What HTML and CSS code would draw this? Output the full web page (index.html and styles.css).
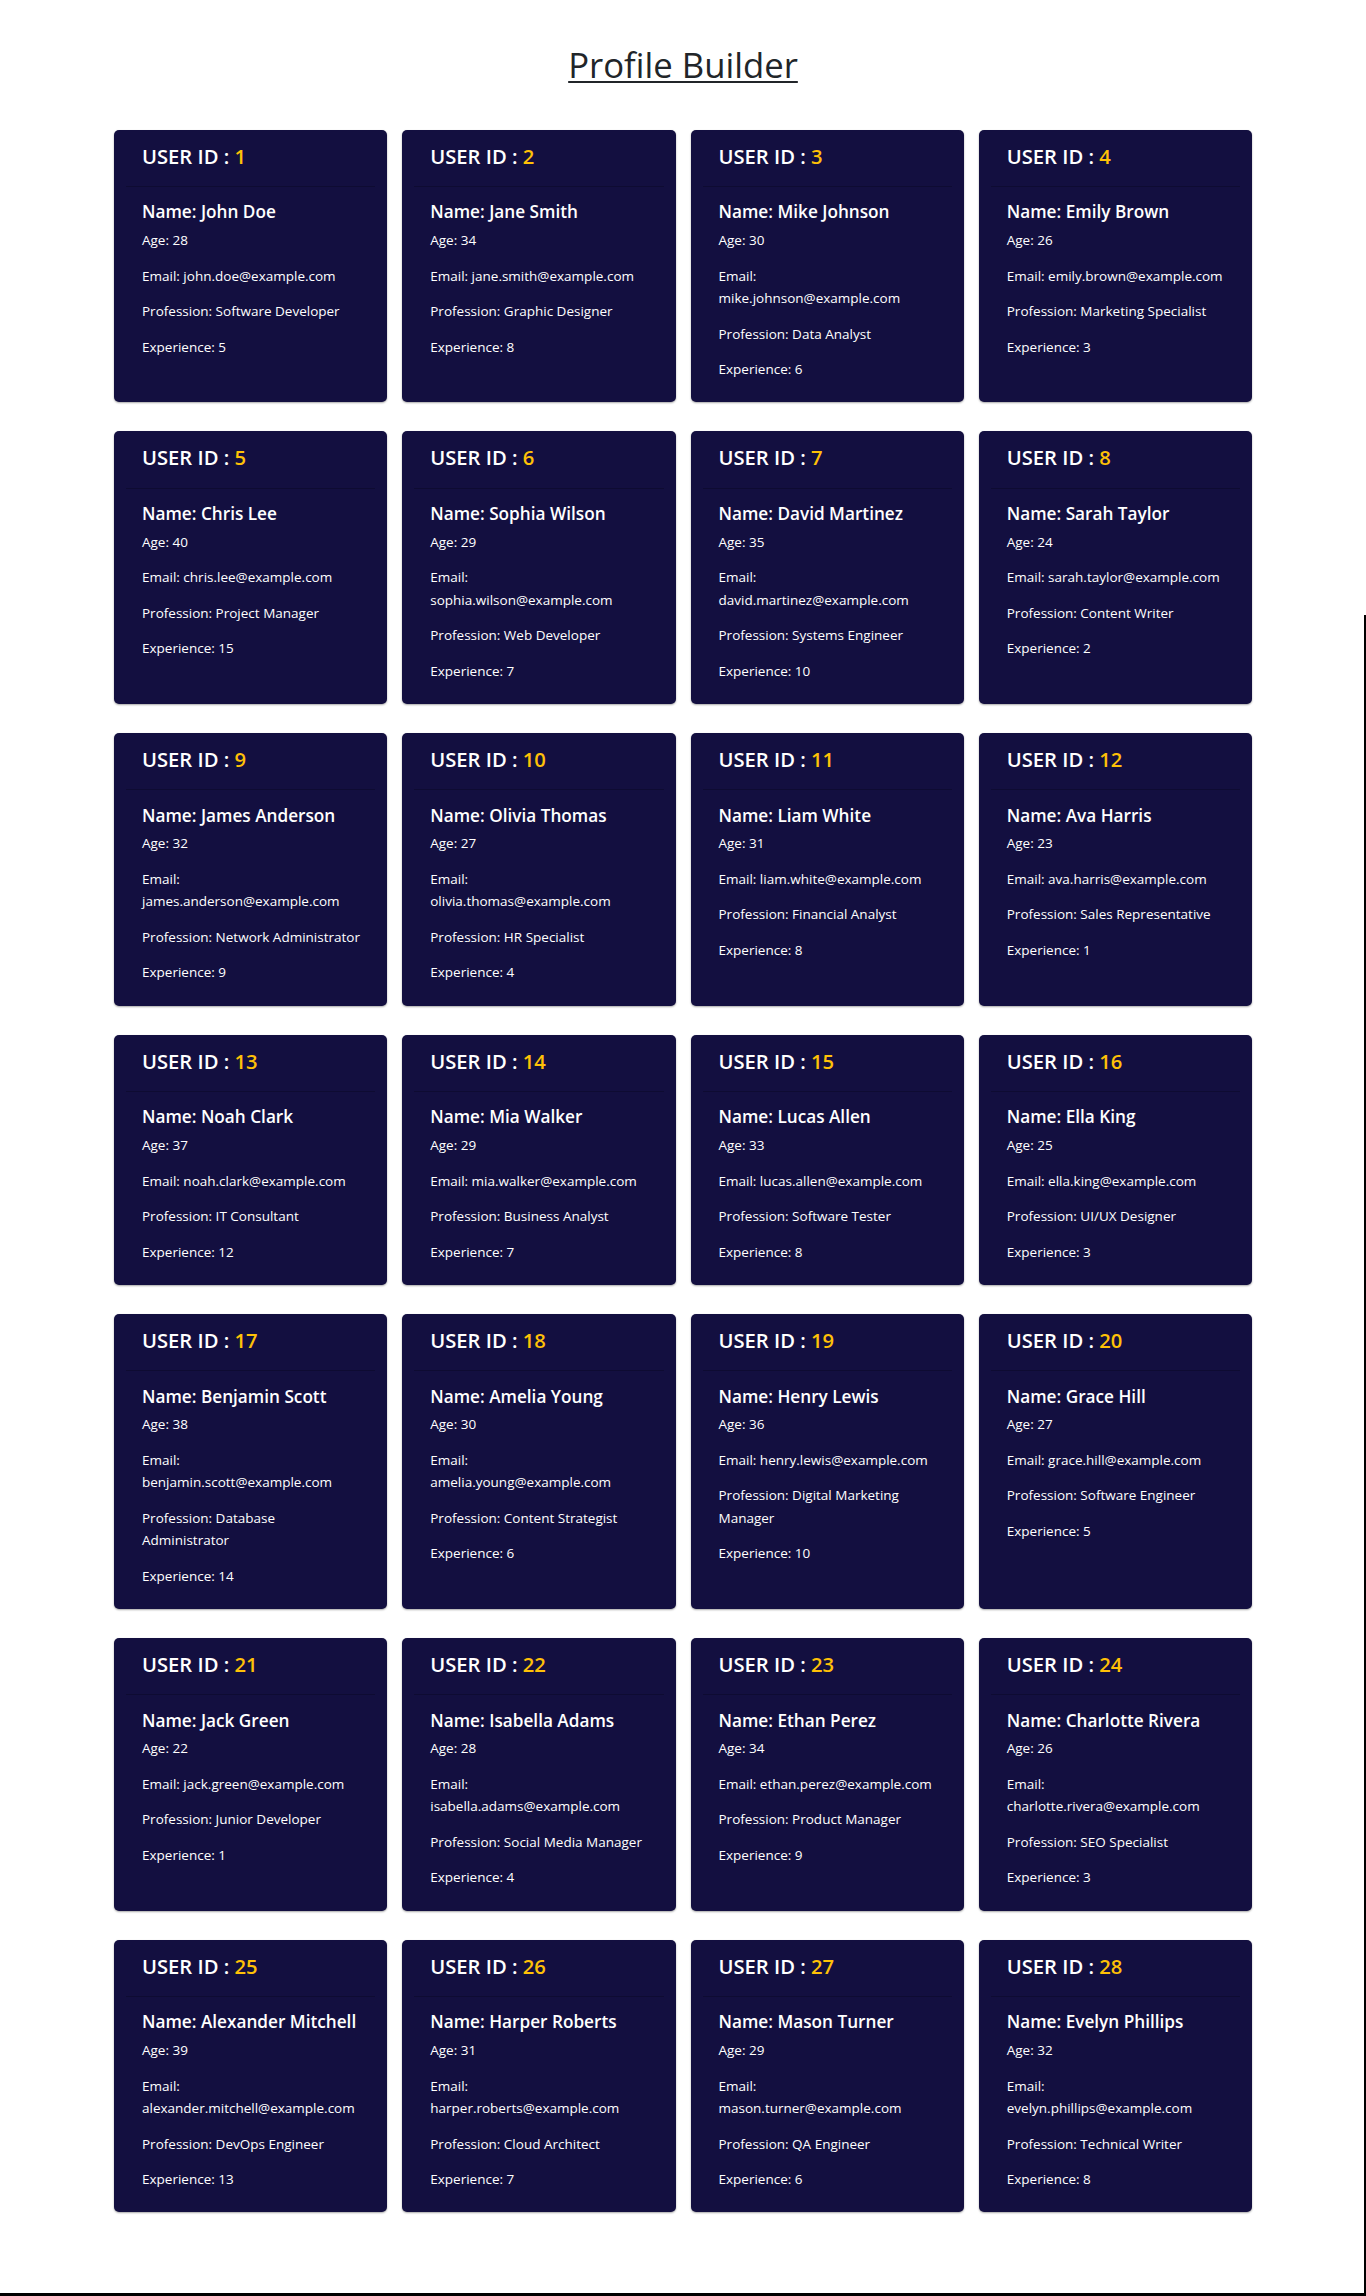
FILE: index.html
```html
<!DOCTYPE html>
<html lang="en">
<head>
<meta charset="utf-8">
<title>Profile Builder</title>
<link rel="stylesheet" href="styles.css">
</head>
<body>
<main class="page">
  <h1 class="page-title">Profile Builder</h1>
  <section class="profiles">
    <article class="card"><div class="card-header"><h4 class="card-title">USER ID : <span class="uid">1</span></h4></div><div class="card-body"><h5 class="name">Name: John Doe</h5><p>Age: 28</p><p>Email: john.doe@example.com</p><p>Profession: Software Developer</p><p>Experience: 5</p></div></article>
    <article class="card"><div class="card-header"><h4 class="card-title">USER ID : <span class="uid">2</span></h4></div><div class="card-body"><h5 class="name">Name: Jane Smith</h5><p>Age: 34</p><p>Email: jane.smith@example.com</p><p>Profession: Graphic Designer</p><p>Experience: 8</p></div></article>
    <article class="card"><div class="card-header"><h4 class="card-title">USER ID : <span class="uid">3</span></h4></div><div class="card-body"><h5 class="name">Name: Mike Johnson</h5><p>Age: 30</p><p>Email: mike.johnson@example.com</p><p>Profession: Data Analyst</p><p>Experience: 6</p></div></article>
    <article class="card"><div class="card-header"><h4 class="card-title">USER ID : <span class="uid">4</span></h4></div><div class="card-body"><h5 class="name">Name: Emily Brown</h5><p>Age: 26</p><p>Email: emily.brown@example.com</p><p>Profession: Marketing Specialist</p><p>Experience: 3</p></div></article>
    <article class="card"><div class="card-header"><h4 class="card-title">USER ID : <span class="uid">5</span></h4></div><div class="card-body"><h5 class="name">Name: Chris Lee</h5><p>Age: 40</p><p>Email: chris.lee@example.com</p><p>Profession: Project Manager</p><p>Experience: 15</p></div></article>
    <article class="card"><div class="card-header"><h4 class="card-title">USER ID : <span class="uid">6</span></h4></div><div class="card-body"><h5 class="name">Name: Sophia Wilson</h5><p>Age: 29</p><p>Email: sophia.wilson@example.com</p><p>Profession: Web Developer</p><p>Experience: 7</p></div></article>
    <article class="card"><div class="card-header"><h4 class="card-title">USER ID : <span class="uid">7</span></h4></div><div class="card-body"><h5 class="name">Name: David Martinez</h5><p>Age: 35</p><p>Email: david.martinez@example.com</p><p>Profession: Systems Engineer</p><p>Experience: 10</p></div></article>
    <article class="card"><div class="card-header"><h4 class="card-title">USER ID : <span class="uid">8</span></h4></div><div class="card-body"><h5 class="name">Name: Sarah Taylor</h5><p>Age: 24</p><p>Email: sarah.taylor@example.com</p><p>Profession: Content Writer</p><p>Experience: 2</p></div></article>
    <article class="card"><div class="card-header"><h4 class="card-title">USER ID : <span class="uid">9</span></h4></div><div class="card-body"><h5 class="name">Name: James Anderson</h5><p>Age: 32</p><p>Email: james.anderson@example.com</p><p>Profession: Network Administrator</p><p>Experience: 9</p></div></article>
    <article class="card"><div class="card-header"><h4 class="card-title">USER ID : <span class="uid">10</span></h4></div><div class="card-body"><h5 class="name">Name: Olivia Thomas</h5><p>Age: 27</p><p>Email: olivia.thomas@example.com</p><p>Profession: HR Specialist</p><p>Experience: 4</p></div></article>
    <article class="card"><div class="card-header"><h4 class="card-title">USER ID : <span class="uid">11</span></h4></div><div class="card-body"><h5 class="name">Name: Liam White</h5><p>Age: 31</p><p>Email: liam.white@example.com</p><p>Profession: Financial Analyst</p><p>Experience: 8</p></div></article>
    <article class="card"><div class="card-header"><h4 class="card-title">USER ID : <span class="uid">12</span></h4></div><div class="card-body"><h5 class="name">Name: Ava Harris</h5><p>Age: 23</p><p>Email: ava.harris@example.com</p><p>Profession: Sales Representative</p><p>Experience: 1</p></div></article>
    <article class="card"><div class="card-header"><h4 class="card-title">USER ID : <span class="uid">13</span></h4></div><div class="card-body"><h5 class="name">Name: Noah Clark</h5><p>Age: 37</p><p>Email: noah.clark@example.com</p><p>Profession: IT Consultant</p><p>Experience: 12</p></div></article>
    <article class="card"><div class="card-header"><h4 class="card-title">USER ID : <span class="uid">14</span></h4></div><div class="card-body"><h5 class="name">Name: Mia Walker</h5><p>Age: 29</p><p>Email: mia.walker@example.com</p><p>Profession: Business Analyst</p><p>Experience: 7</p></div></article>
    <article class="card"><div class="card-header"><h4 class="card-title">USER ID : <span class="uid">15</span></h4></div><div class="card-body"><h5 class="name">Name: Lucas Allen</h5><p>Age: 33</p><p>Email: lucas.allen@example.com</p><p>Profession: Software Tester</p><p>Experience: 8</p></div></article>
    <article class="card"><div class="card-header"><h4 class="card-title">USER ID : <span class="uid">16</span></h4></div><div class="card-body"><h5 class="name">Name: Ella King</h5><p>Age: 25</p><p>Email: ella.king@example.com</p><p>Profession: UI/UX Designer</p><p>Experience: 3</p></div></article>
    <article class="card"><div class="card-header"><h4 class="card-title">USER ID : <span class="uid">17</span></h4></div><div class="card-body"><h5 class="name">Name: Benjamin Scott</h5><p>Age: 38</p><p>Email: benjamin.scott@example.com</p><p>Profession: Database Administrator</p><p>Experience: 14</p></div></article>
    <article class="card"><div class="card-header"><h4 class="card-title">USER ID : <span class="uid">18</span></h4></div><div class="card-body"><h5 class="name">Name: Amelia Young</h5><p>Age: 30</p><p>Email: amelia.young@example.com</p><p>Profession: Content Strategist</p><p>Experience: 6</p></div></article>
    <article class="card"><div class="card-header"><h4 class="card-title">USER ID : <span class="uid">19</span></h4></div><div class="card-body"><h5 class="name">Name: Henry Lewis</h5><p>Age: 36</p><p>Email: henry.lewis@example.com</p><p>Profession: Digital Marketing Manager</p><p>Experience: 10</p></div></article>
    <article class="card"><div class="card-header"><h4 class="card-title">USER ID : <span class="uid">20</span></h4></div><div class="card-body"><h5 class="name">Name: Grace Hill</h5><p>Age: 27</p><p>Email: grace.hill@example.com</p><p>Profession: Software Engineer</p><p>Experience: 5</p></div></article>
    <article class="card"><div class="card-header"><h4 class="card-title">USER ID : <span class="uid">21</span></h4></div><div class="card-body"><h5 class="name">Name: Jack Green</h5><p>Age: 22</p><p>Email: jack.green@example.com</p><p>Profession: Junior Developer</p><p>Experience: 1</p></div></article>
    <article class="card"><div class="card-header"><h4 class="card-title">USER ID : <span class="uid">22</span></h4></div><div class="card-body"><h5 class="name">Name: Isabella Adams</h5><p>Age: 28</p><p>Email: isabella.adams@example.com</p><p>Profession: Social Media Manager</p><p>Experience: 4</p></div></article>
    <article class="card"><div class="card-header"><h4 class="card-title">USER ID : <span class="uid">23</span></h4></div><div class="card-body"><h5 class="name">Name: Ethan Perez</h5><p>Age: 34</p><p>Email: ethan.perez@example.com</p><p>Profession: Product Manager</p><p>Experience: 9</p></div></article>
    <article class="card"><div class="card-header"><h4 class="card-title">USER ID : <span class="uid">24</span></h4></div><div class="card-body"><h5 class="name">Name: Charlotte Rivera</h5><p>Age: 26</p><p>Email: charlotte.rivera@example.com</p><p>Profession: SEO Specialist</p><p>Experience: 3</p></div></article>
    <article class="card"><div class="card-header"><h4 class="card-title">USER ID : <span class="uid">25</span></h4></div><div class="card-body"><h5 class="name">Name: Alexander Mitchell</h5><p>Age: 39</p><p>Email: alexander.mitchell@example.com</p><p>Profession: DevOps Engineer</p><p>Experience: 13</p></div></article>
    <article class="card"><div class="card-header"><h4 class="card-title">USER ID : <span class="uid">26</span></h4></div><div class="card-body"><h5 class="name">Name: Harper Roberts</h5><p>Age: 31</p><p>Email: harper.roberts@example.com</p><p>Profession: Cloud Architect</p><p>Experience: 7</p></div></article>
    <article class="card"><div class="card-header"><h4 class="card-title">USER ID : <span class="uid">27</span></h4></div><div class="card-body"><h5 class="name">Name: Mason Turner</h5><p>Age: 29</p><p>Email: mason.turner@example.com</p><p>Profession: QA Engineer</p><p>Experience: 6</p></div></article>
    <article class="card"><div class="card-header"><h4 class="card-title">USER ID : <span class="uid">28</span></h4></div><div class="card-body"><h5 class="name">Name: Evelyn Phillips</h5><p>Age: 32</p><p>Email: evelyn.phillips@example.com</p><p>Profession: Technical Writer</p><p>Experience: 8</p></div></article>
  </section>
</main>
</body>
</html>
```
FILE: styles.css
```css
html, body { height: 100%; }
body {
  margin: 0;
  font-family: "Open Sans", sans-serif;
  color: #212529;
  background: #fff;
}
body::before {
  content: "";
  position: fixed;
  left: 1364px;
  width: 2px;
  top: 615px;
  bottom: 0;
  background: #000;
}
body::after {
  content: "";
  position: fixed;
  left: 0;
  right: 0;
  bottom: 0;
  height: 3px;
  background: #000;
}
.page { padding: 44px 0 40px; }
.page-title {
  text-align: center;
  font-size: 34.7px;
  font-weight: 400;
  line-height: 1.2;
  margin: 0 0 44px;
  text-decoration: underline;
  text-decoration-thickness: 2px;
  text-underline-offset: 3px;
}
.profiles {
  width: 1138px;
  margin: 0 auto;
  display: grid;
  grid-template-columns: repeat(4, 1fr);
  column-gap: 15px;
  row-gap: 29px;
}
.card {
  background: #130f40;
  color: #fff;
  border-radius: 5px;
  padding: 6px 12px 8.8px;
  box-shadow: 0 1px 2px rgba(0, 0, 0, 0.35);
}
.card-header {
  padding: 8px 16px;
  border-bottom: 1px solid rgba(0, 0, 0, 0.22);
}
.card-title {
  margin: 0 0 10px;
  font-size: 20.2px;
  font-weight: 600;
  line-height: 1.2;
}
.uid { color: #ffc107; }
.card-body { padding: 15.5px 13px 0 16px; }
.name {
  margin: 0 0 6px;
  font-size: 17.2px;
  font-weight: 600;
  line-height: 1.2;
}
.card-body p {
  margin: 0 0 13px;
  font-size: 13.5px;
  line-height: 22.5px;
}
```
